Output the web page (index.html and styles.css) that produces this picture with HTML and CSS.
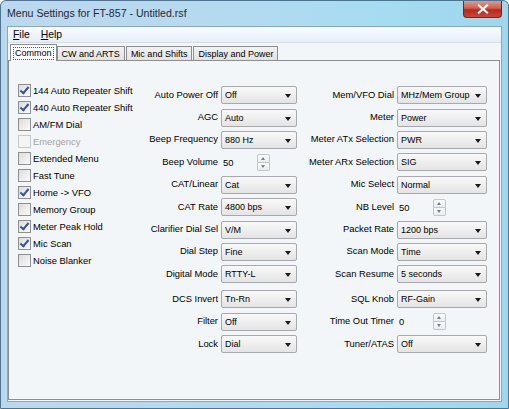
FILE: index.html
```html
<!DOCTYPE html>
<html>
<head>
<meta charset="utf-8">
<title>Menu Settings for FT-857</title>
<link rel="stylesheet" href="styles.css">
</head>
<body>
<div class="window">
  <div class="titlebar">
    <span class="title">Menu Settings for FT-857 - Untitled.rsf</span>
    <div class="close"><svg width="12" height="10" viewBox="0 0 12 10"><path d="M2 1.5 L10 8.5 M10 1.5 L2 8.5" stroke="#fff" stroke-width="2.2" stroke-linecap="square"/></svg></div>
  </div>
  <div class="client">
    <div class="menubar">
      <span class="menu"><u>F</u>ile</span>
      <span class="menu"><u>H</u>elp</span>
    </div>
    <div class="tabs">
      <div class="tab active"><span class="focus">Common</span></div>
      <div class="tab">CW and ARTS</div>
      <div class="tab">Mic and Shifts</div>
      <div class="tab">Display and Power</div>
    </div>
    <div class="panel">
      <div class="checks">
        <div class="chk"><span class="box on"></span>144 Auto Repeater Shift</div>
        <div class="chk"><span class="box on"></span>440 Auto Repeater Shift</div>
        <div class="chk"><span class="box"></span>AM/FM Dial</div>
        <div class="chk disabled"><span class="box"></span>Emergency</div>
        <div class="chk"><span class="box"></span>Extended Menu</div>
        <div class="chk"><span class="box"></span>Fast Tune</div>
        <div class="chk"><span class="box on"></span>Home -&gt; VFO</div>
        <div class="chk"><span class="box"></span>Memory Group</div>
        <div class="chk"><span class="box on"></span>Meter Peak Hold</div>
        <div class="chk"><span class="box on"></span>Mic Scan</div>
        <div class="chk"><span class="box"></span>Noise Blanker</div>
      </div>

      <div class="form mid">
        <div class="row"><label>Auto Power Off</label><div class="combo">Off</div></div>
        <div class="row"><label>AGC</label><div class="combo">Auto</div></div>
        <div class="row"><label>Beep Frequency</label><div class="combo">880 Hz</div></div>
        <div class="row"><label>Beep Volume</label><div class="spin"><span class="val">50</span><span class="btns"><span class="up"></span><span class="dn"></span></span></div></div>
        <div class="row"><label>CAT/Linear</label><div class="combo">Cat</div></div>
        <div class="row"><label>CAT Rate</label><div class="combo">4800 bps</div></div>
        <div class="row"><label>Clarifier Dial Sel</label><div class="combo">V/M</div></div>
        <div class="row"><label>Dial Step</label><div class="combo">Fine</div></div>
        <div class="row"><label>Digital Mode</label><div class="combo">RTTY-L</div></div>
        <div class="row gap"><label>DCS Invert</label><div class="combo">Tn-Rn</div></div>
        <div class="row"><label>Filter</label><div class="combo">Off</div></div>
        <div class="row"><label>Lock</label><div class="combo">Dial</div></div>
      </div>

      <div class="form right">
        <div class="row"><label>Mem/VFO Dial</label><div class="combo">MHz/Mem Group</div></div>
        <div class="row"><label>Meter</label><div class="combo">Power</div></div>
        <div class="row"><label>Meter ATx Selection</label><div class="combo">PWR</div></div>
        <div class="row"><label>Meter ARx Selection</label><div class="combo">SIG</div></div>
        <div class="row"><label>Mic Select</label><div class="combo">Normal</div></div>
        <div class="row"><label>NB Level</label><div class="spin"><span class="val">50</span><span class="btns"><span class="up"></span><span class="dn"></span></span></div></div>
        <div class="row"><label>Packet Rate</label><div class="combo">1200 bps</div></div>
        <div class="row"><label>Scan Mode</label><div class="combo">Time</div></div>
        <div class="row"><label>Scan Resume</label><div class="combo">5 seconds</div></div>
        <div class="row gap"><label>SQL Knob</label><div class="combo">RF-Gain</div></div>
        <div class="row"><label>Time Out Timer</label><div class="spin"><span class="val">0</span><span class="btns"><span class="up"></span><span class="dn"></span></span></div></div>
        <div class="row"><label>Tuner/ATAS</label><div class="combo">Off</div></div>
      </div>
    </div>
  </div>
</div>
</body>
</html>
```
FILE: styles.css
```css
html, body { margin: 0; padding: 0; }
body {
  width: 509px; height: 409px; overflow: hidden;
  font-family: "Liberation Sans", Arial, sans-serif;
  font-size: 9.4px; color: #000;
  background: #fff;
}
.window {
  box-sizing: border-box;
  width: 509px; height: 409px;
  background: linear-gradient(90deg, #bcd8ee 0%, #b4daf0 45%, #a6dcf1 75%, #9fd6ee 100%);
  border: 1px solid #4f7393;
  border-radius: 6px 6px 0 0;
  display: flex; flex-direction: column;
  padding: 0 6px 6px 6px;
}
.titlebar {
  height: 25px;
  display: flex; align-items: flex-start;
}
.title {
  margin-top: 6px;
  font-size: 10.6px;
  color: #1b2a3a;
}
.close {
  margin-left: auto;
  width: 39px; height: 17px;
  box-sizing: border-box;
  border: 1px solid #6b2a2a;
  border-top: none;
  border-radius: 0 0 4px 4px;
  background: linear-gradient(#dd9a8f 0%, #cf5e52 45%, #b8281c 55%, #c9463a 100%);
  display: flex; align-items: center; justify-content: center;
}
.client {
  flex: 1;
  background: #f3f6f9;
  border: 1px solid #87a7c3;
  display: flex; flex-direction: column;
}
.menubar {
  height: 15px;
  background: linear-gradient(#fafcfe, #e6eef7);
  border-bottom: 1px solid #d5dfea;
  display: flex; align-items: center;
  padding-left: 5px;
  font-size: 10.4px;
}
.menu { margin-right: 11px; }
.tabs {
  height: 17px;
  display: flex; align-items: flex-end;
  padding-left: 2px;
  position: relative; z-index: 1;
  font-size: 9px;
}
.tab {
  height: 14px;
  box-sizing: border-box;
  padding: 0 4px;
  border: 1px solid #8c8e94;
  border-bottom: none;
  background: linear-gradient(#f2f2f2, #e3e3e3);
  display: flex; align-items: center;
  margin-right: 1px;
  white-space: nowrap;
}
.tab.active {
  height: 17px;
  background: #fcfcfc;
  margin-bottom: -1px;
  padding: 0 2px;
  margin-right: 0;
}
.focus {
  border: 1px dotted #555;
  padding: 0 1px;
  line-height: 11px;
}
.panel {
  flex: 1;
  margin: 0 1px 1px 0;
  border: 1px solid #8c8e94;
  background: #f3f6f9;
  display: flex;
  align-items: flex-start;
}
.checks {
  width: 127px;
  padding: 21px 0 0 9px;
  display: flex; flex-direction: column;
}
.chk {
  height: 17px;
  display: flex; align-items: center;
  white-space: nowrap;
}
.chk.disabled { color: #a3a3a3; }
.box {
  width: 13px; height: 13px;
  box-sizing: border-box;
  border: 1px solid #8f8f8f;
  background: linear-gradient(135deg, #dcdcdc, #fbfbfb);
  margin-right: 2px;
  flex: none;
  position: relative;
}
.chk.disabled .box { border-color: #c8c8c8; background: #f4f4f4; }
.box.on::after {
  content: "";
  position: absolute;
  left: 3px; top: 0px;
  width: 3px; height: 7px;
  border: solid #35539a;
  border-width: 0 2px 2px 0;
  transform: rotate(40deg);
}
.form {
  padding-top: 23px;
  display: flex; flex-direction: column;
}
.row {
  height: 22.4px;
  display: flex; align-items: center;
}
.row.gap { margin-top: 2.6px; }
.row label {
  text-align: right;
  margin-right: 3px;
  white-space: nowrap;
  position: relative; top: -1px;
}
.mid label { width: 73px; }
.mid .combo { width: 76px; }
.right label { width: 97px; }
.right .combo { width: 90px; }
.combo {
  height: 18px;
  box-sizing: border-box;
  border: 1px solid #a6a9ae;
  border-radius: 2px;
  background: linear-gradient(#f9f9f9 0%, #eeeeee 50%, #e4e4e4 100%);
  display: flex; align-items: center;
  padding-left: 3px;
  font-size: 9px;
  white-space: nowrap;
  position: relative;
}
.combo::after {
  content: "";
  position: absolute;
  right: 5px; top: 7px;
  border-left: 3.5px solid transparent;
  border-right: 3.5px solid transparent;
  border-top: 4px solid #1a1a1a;
}
.spin {
  display: flex; align-items: center;
  height: 18px;
}
.spin .val {
  width: 34px;
  padding-left: 2px;
}
.btns {
  display: flex; flex-direction: column;
  width: 13px; height: 17px;
}
.btns span {
  flex: 1;
  box-sizing: border-box;
  border: 1px solid #c2c6cc;
  background: linear-gradient(#fbfbfb, #e9ecef);
  position: relative;
}
.btns .up { border-radius: 2px 2px 0 0; }
.btns .dn { border-top: none; border-radius: 0 0 2px 2px; }
.btns .up::after, .btns .dn::after {
  content: "";
  position: absolute;
  left: 3px;
  border-left: 2.5px solid transparent;
  border-right: 2.5px solid transparent;
}
.btns .up::after { top: 2px; border-bottom: 3px solid #6a7f99; }
.btns .dn::after { top: 2px; border-top: 3px solid #6a7f99; }
```
